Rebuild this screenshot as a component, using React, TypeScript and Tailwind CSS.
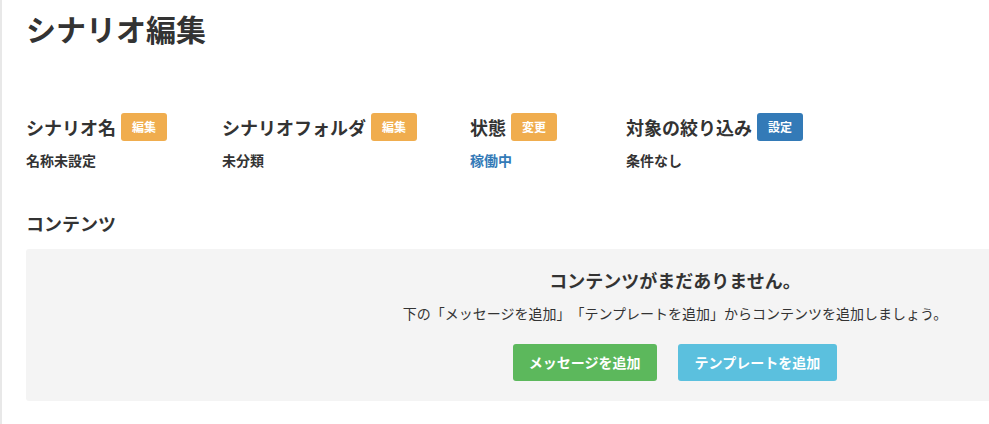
import React from "react";

const font = { fontFamily: '"Noto Sans CJK JP", "Noto Sans", sans-serif' };

function Badge({ label, color }: { label: string; color: "orange" | "blue" }) {
  return (
    <span
      className={
        "ml-[5px] inline-flex h-[28px] w-[46px] items-center justify-center rounded-[3px] text-[12px] font-bold leading-none text-white " +
        (color === "orange" ? "bg-[#f0ad4e]" : "bg-[#337ab7]")
      }
    >
      {label}
    </span>
  );
}

function Field({
  title,
  badge,
  color,
  value,
  valueClass,
  width,
}: {
  title: string;
  badge: string;
  color: "orange" | "blue";
  value: string;
  valueClass?: string;
  width: string;
}) {
  return (
    <div className={width + " shrink-0"}>
      <div className="flex h-[28px] items-center">
        <span className="text-[18px] font-bold leading-[28px] text-[#333]">{title}</span>
        <Badge label={badge} color={color} />
      </div>
      <div className={"mt-[9px] text-[14px] font-bold leading-[20px] " + (valueClass ?? "text-[#333]")}>{value}</div>
    </div>
  );
}

export default function App() {
  return (
    <div className="h-[424px] w-full overflow-hidden bg-white [text-spacing-trim:space-all]" style={font}>
      <div className="h-full border-l-2 border-[#e8e8e8] pl-[24px]">
        <h1 className="pt-[10px] text-[30px] font-bold leading-[36px] text-[#333]">シナリオ編集</h1>

        <div className="mt-[67px] flex">
          <Field title="シナリオ名" badge="編集" color="orange" value="名称未設定" width="w-[196px]" />
          <Field title="シナリオフォルダ" badge="編集" color="orange" value="未分類" width="w-[248px]" />
          <Field title="状態" badge="変更" color="orange" value="稼働中" valueClass="text-[#337ab7]" width="w-[156px]" />
          <Field title="対象の絞り込み" badge="設定" color="blue" value="条件なし" width="w-[300px]" />
        </div>

        <h2 className="mt-[40px] text-[18px] font-bold leading-[26px] text-[#333]">コンテンツ</h2>

        <div className="mt-[13px] w-[1298px] rounded-[3px] bg-[#f4f4f4] pb-[20px] pt-[18px] text-center text-[#333]">
          <div className="text-[18px] font-bold leading-[26px]">コンテンツがまだありません。</div>
          <div className="mt-[10px] text-[14px] leading-[20px]">
            下の「メッセージを追加」「テンプレートを追加」からコンテンツを追加しましょう。
          </div>
          <div className="mt-[21px] flex justify-center gap-[21px]">
            <button className="h-[37px] rounded-[3px] bg-[#5cb85c] px-[16px] text-[14px] font-bold text-white">
              メッセージを追加
            </button>
            <button className="h-[37px] rounded-[3px] bg-[#5bc0de] px-[17px] text-[14px] font-bold text-white">
              テンプレートを追加
            </button>
          </div>
        </div>
      </div>
    </div>
  );
}
